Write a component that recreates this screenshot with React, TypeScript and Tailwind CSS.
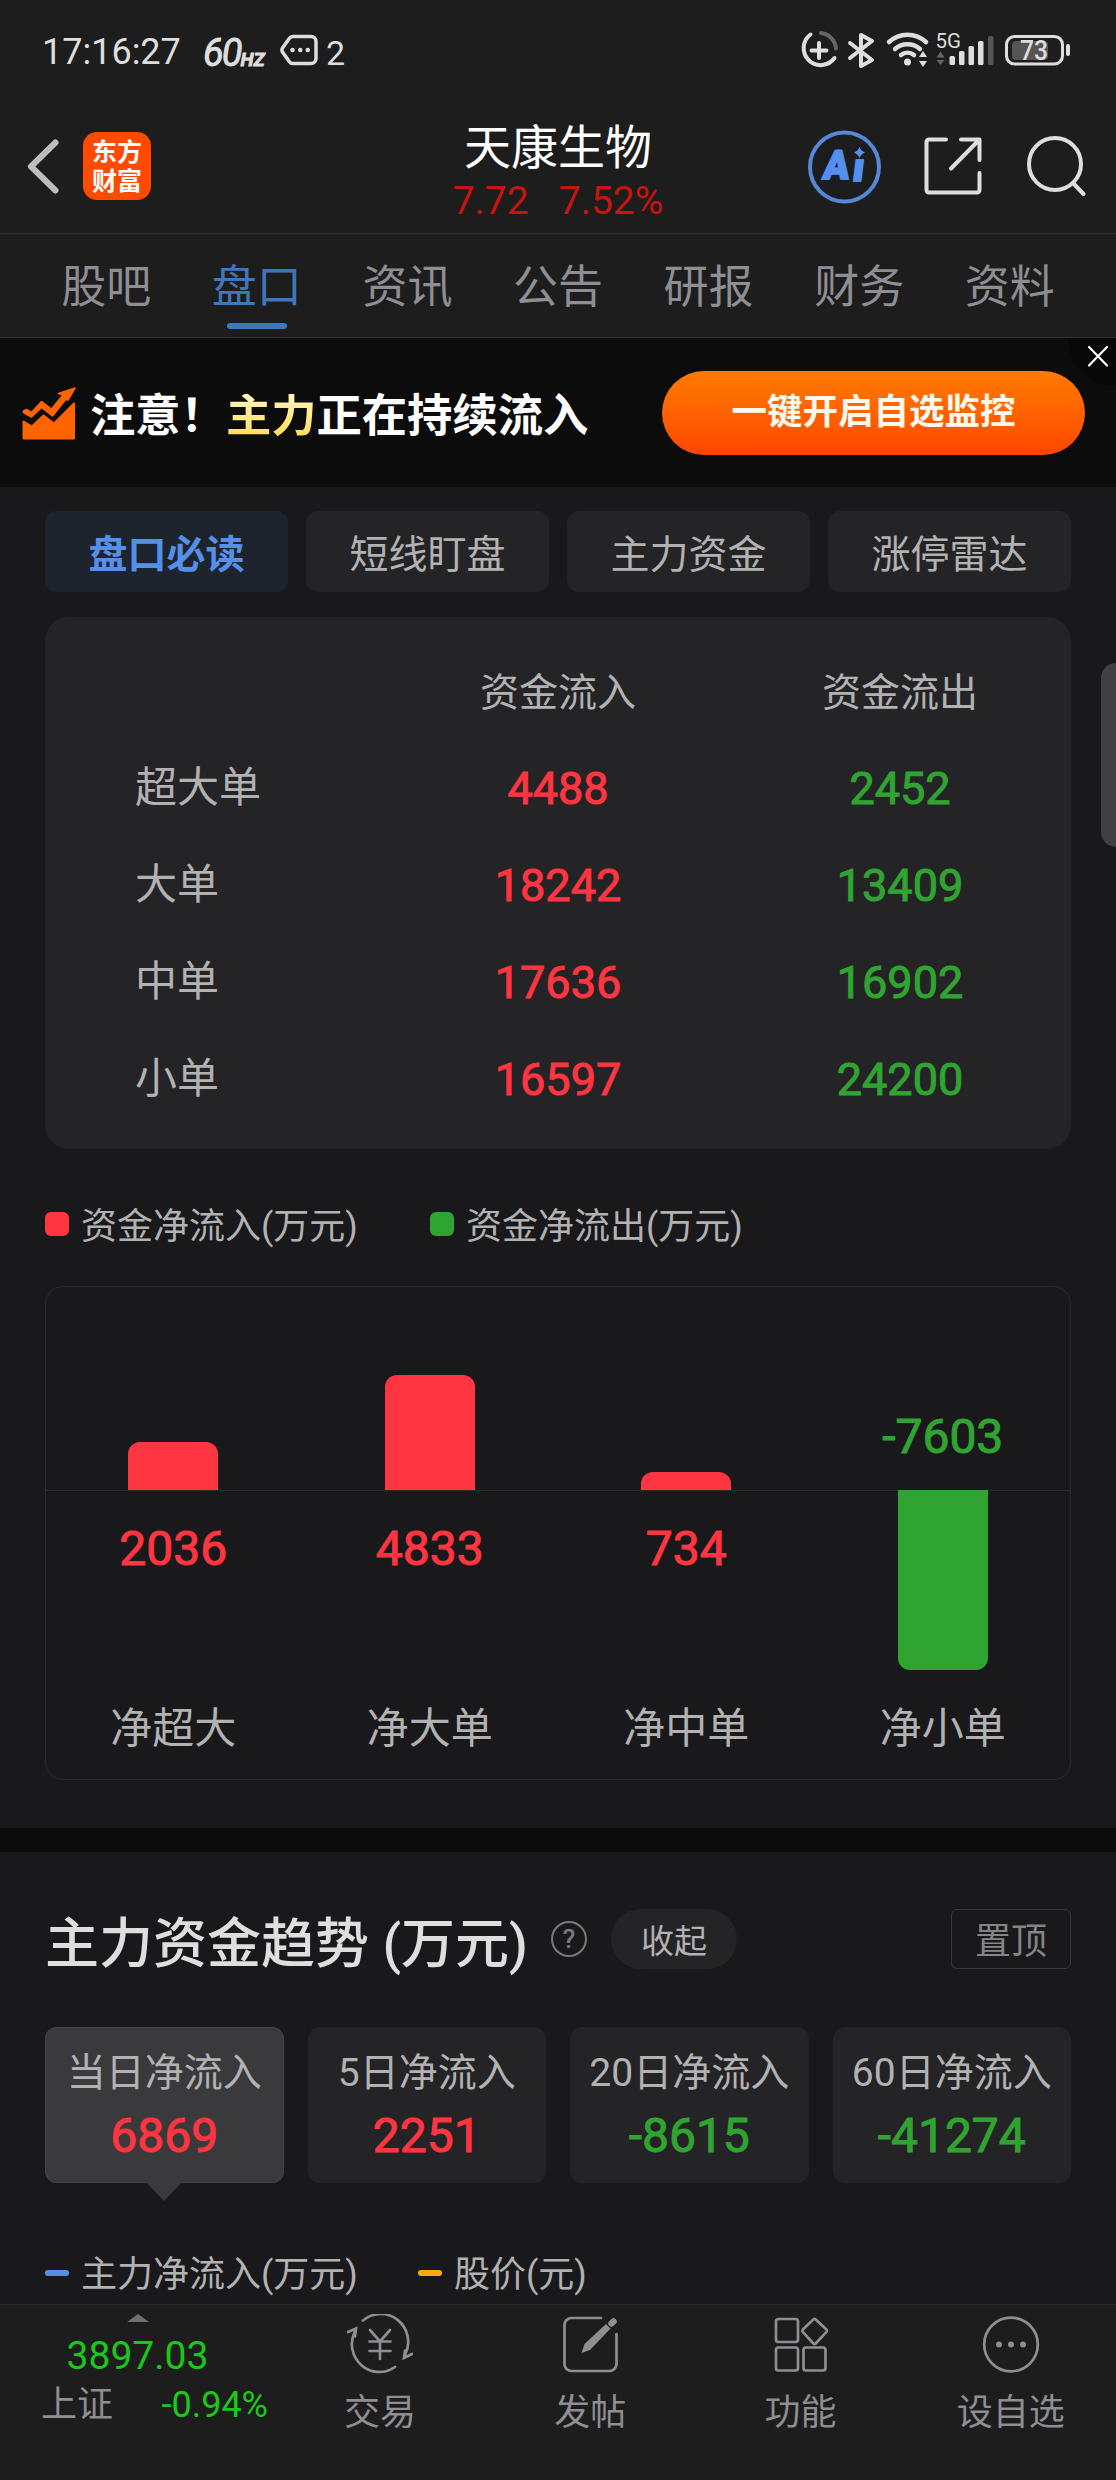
import React from 'react';

const tabs = ['股吧', '盘口', '资讯', '公告', '研报', '财务', '资料'];
const pills = ['盘口必读', '短线盯盘', '主力资金', '涨停雷达'];

const orders = [
  { label: '超大单', inflow: 4488, outflow: 2452 },
  { label: '大单', inflow: 18242, outflow: 13409 },
  { label: '中单', inflow: 17636, outflow: 16902 },
  { label: '小单', inflow: 16597, outflow: 24200 },
];

const bars = [
  { label: '净超大', value: 2036, height: 48 },
  { label: '净大单', value: 4833, height: 115 },
  { label: '净中单', value: 734, height: 18 },
  { label: '净小单', value: -7603, height: 180 },
];

const trends = [
  { label: '当日净流入', value: 6869 },
  { label: '5日净流入', value: 2251 },
  { label: '20日净流入', value: -8615 },
  { label: '60日净流入', value: -41274 },
];

export default function App() {
  return (
    <div className="relative flex h-[2480px] w-[1116px] flex-col overflow-hidden bg-[#19191b] font-['Roboto','Noto_Sans_CJK_SC',sans-serif] leading-none text-[#b2b2b2]">
      <StatusBar />
      <Header />
      <Tabs />
      <Banner />
      <main className="h-[1817px] overflow-hidden">
        <div className="grid grid-cols-4 gap-[18px] px-[45px] pt-6">
          {pills.map((pill, i) => (
            <button
              key={pill}
              className={`flex h-[81px] items-center justify-center rounded-xl pt-[7px] text-[39px] ${
                i === 0 ? 'bg-[#1e242d] font-bold text-[#568fe8]' : 'bg-[#242426]'
              }`}
            >
              {pill}
            </button>
          ))}
        </div>
        <OrderTable />
        <NetChart />
        <div className="mt-12 h-6 bg-[#0c0c0c]"></div>
        <Trend />
      </main>
      <BottomBar />
      {/* Side drawer handle */}
      <div className="absolute top-[663px] right-0 h-[184px] w-[15px] rounded-l-[20px] bg-[#404043]"></div>
    </div>
  );
}

function StatusBar() {
  return (
    <div className="flex h-24 items-center justify-between bg-[#1d1d1d] pt-[8px] pr-[45px] pl-[42px] text-[#dedede]">
      <div className="flex items-center">
        <span className="w-[161px] text-[36px]">17:16:27</span>
        <span className="flex w-[77px] items-baseline pt-[2px] italic [-webkit-text-stroke:0.8px]">
          <span className="text-[38px] tracking-[-2px]">60</span>
          <span className="text-[19px] font-bold">HZ</span>
        </span>
        <svg width="38" height="32" viewBox="0 0 38 32" fill="none" className="-mt-1">
          <path d="M13 2.500h18a5 5 0 0 1 5 5v17a5 5 0 0 1-5 5H13q-2.500 0-3.800-2L2.500 18q-1.200-2 0-4L9.200 4.500q1.300-2 3.800-2z" stroke="currentColor" strokeWidth="3.500" />
          <circle cx="12.500" cy="16" r="2.300" fill="currentColor" />
          <circle cx="20.200" cy="16" r="2.300" fill="currentColor" />
          <circle cx="27.800" cy="16" r="2.300" fill="currentColor" />
        </svg>
        <span className="ml-2 pt-[2px] text-[34px]">2</span>
      </div>
      <svg width="272" height="40" viewBox="800 29 272 40" fill="none" stroke="currentColor" strokeWidth="4" strokeLinecap="round" strokeLinejoin="round" className="-mt-[5px]">
        <path d="M811.500 33.500A17 17 0 1 0 835.500 57M820 42v15M812.500 49.500h15" />
        <path d="M822 32a17 17 0 0 1 15 15.500" stroke="#666" />
        <path d="M851 42l22 17-11 6V34l11 6-22 17" />
        <path d="M890 41a27 27 0 0 1 37 0M896 48a19 19 0 0 1 25 0M902 54a10.500 10.500 0 0 1 13 0" strokeWidth="4.500" />
        <g fill="currentColor" stroke="none">
          <circle cx="908.500" cy="61" r="3.500" />
          <path d="M924 50l4 6h-8zM924 66l4-6h-8z" stroke="#1d1d1d" strokeWidth="3" paintOrder="stroke" />
          <path d="M941.500 50.500l4 6h-8zM941.500 64l4-5h-8z" fill="#666" />
          <rect x="950.500" y="55" width="5.500" height="9" rx="1.500" />
          <rect x="960" y="50" width="5.500" height="14" rx="1.500" />
          <rect x="969.500" y="45" width="5.500" height="19" rx="1.500" />
          <rect x="979" y="40" width="5.500" height="24" rx="1.500" />
          <rect x="989" y="35" width="5.500" height="29" rx="1.500" fill="#555" />
          <text x="936.500" y="47" fontSize="20.500">5G</text>
          <rect x="1013" y="40" width="36" height="19" rx="4" fill="#555" />
          <text x="1021" y="59" fontSize="28" fontWeight="500" textLength="28" lengthAdjust="spacingAndGlyphs">73</text>
          <rect x="1067" y="43" width="4" height="12" rx="2" />
        </g>
        <rect x="1007.500" y="35.500" width="56" height="27.500" rx="8" strokeWidth="3" />
      </svg>
    </div>
  );
}

function Header() {
  return (
    <header className="flex h-[138px] border-b border-[#333] bg-[#1d1d1d]">
      <div className="flex w-[360px] items-center pl-[26px]">
        <svg width="36" height="60" viewBox="0 0 36 60" fill="none" stroke="#bdbdbd" strokeWidth="6" strokeLinecap="round" strokeLinejoin="round" className="mt-[3px]">
          <path d="M29.500 6.500L5 30.500l24.500 24" />
        </svg>
        <div className="mt-[3px] ml-[21px] flex h-[68px] w-[68px] flex-col items-center justify-center rounded-[14px] bg-[#ff4a00] pt-[2px] text-[25px] leading-[29px] font-bold text-white">
          <span>东方</span>
          <span>财富</span>
        </div>
      </div>
      <div className="flex flex-1 flex-col items-center pt-[28px]">
        <h1 className="text-[47px] text-white">天康生物</h1>
        <div className="mt-[11px] flex gap-[30px] text-[39px] text-[#c8140f]">
          <span>7.72</span>
          <span>7.52%</span>
        </div>
      </div>
      <div className="flex w-[360px] items-center justify-end pr-[29px]">
        <svg width="74" height="74" viewBox="0 0 74 74" className="mt-1">
          <circle cx="37.500" cy="37" r="34.500" fill="none" stroke="#5588d6" strokeWidth="4" />
          <g fill="#528fee" stroke="#528fee" strokeWidth="2" strokeLinejoin="round" fontSize="40" fontWeight="900">
            <text transform="translate(15 49) skewX(-7)" textLength="26" lengthAdjust="spacingAndGlyphs">A</text>
            <text transform="translate(44.500 50.500) skewX(-7)">ı</text>
          </g>
          <path d="M52.500 17q1.500 4 5.500 5.500-4 1.500-5.500 5.500-1.500-4-5.500-5.500 4-1.500 5.500-5.500z" fill="#528fee" />
        </svg>
        <svg width="60" height="60" viewBox="0 0 60 60" fill="none" stroke="#dedede" strokeWidth="4" strokeLinecap="round" strokeLinejoin="round" className="mt-[3px] ml-[42px]">
          <path d="M23 3.500H6A2.500 2.500 0 0 0 3.500 6v48A2.500 2.500 0 0 0 6 56.500h48a2.500 2.500 0 0 0 2.500-2.500V37M38 3.500h18.500V24M56 4L28 32.500" />
        </svg>
        <svg width="62" height="62" viewBox="0 0 62 62" fill="none" stroke="#dedede" strokeWidth="4" strokeLinecap="round" className="ml-[42px]">
          <circle cx="30" cy="30" r="26" />
          <path d="M48 49l10.500 11" />
        </svg>
      </div>
    </header>
  );
}

function Tabs() {
  return (
    <nav className="grid h-[104px] grid-cols-7 border-b border-[#333] bg-[#1d1d1d] px-[31px]">
      {tabs.map((tab) => (
        <div key={tab} className="flex flex-col items-center pt-[31px]">
          <span className={`text-[45px] ${tab === '盘口' ? 'text-[#3d78bd]' : 'text-[#8e8e93]'}`}>{tab}</span>
          {tab === '盘口' && <span className="mt-[13px] h-[6px] w-[60px] rounded-full bg-[#3d78bd]"></span>}
        </div>
      ))}
    </nav>
  );
}

function Banner() {
  return (
    <section className="relative flex h-[149px] items-center bg-[#0c0c0c] pr-[31px] pl-[22px]">
      <svg width="55" height="54" viewBox="0 0 55 54" fill="#ff6400" stroke="#ff6400" strokeLinejoin="round" className="mt-[2px]">
        <path d="M1.500 34.500l8.500 5L21.500 28.500l10.500 8L52 16.500v35H1.500z" strokeWidth="2" />
        <path d="M1.500 24l3-1.500 5 3L19.500 14.500l10 7.500L41 8l-4.500-1.500L53 1l-7 12-2-1L30.500 29l-11-8.500-10 9.500-8-4.500z" strokeWidth="1.500" />
      </svg>
      <p className="ml-[13px] flex pt-[8px] text-[45.300px] font-bold text-white">
        <span>注意！</span>
        <span className="bg-linear-to-b from-[#fff3bd] to-[#ffdf3c] bg-clip-text text-transparent">主力</span>
        <span>正在持续流入</span>
      </p>
      <button className="ml-auto h-[84px] w-[423px] rounded-full bg-linear-to-b from-[#ff7a00] to-[#ff4500] text-[35.500px] font-bold text-[#fffaf0]">
        一键开启自选监控
      </button>
      {/* Close */}
      <div className="absolute top-0 right-0 h-12 w-12 rounded-bl-[46px] bg-[#080808]">
        <svg width="48" height="48" viewBox="0 0 48 48" stroke="#fff" strokeWidth="2.200" strokeLinecap="round">
          <path d="M21 9l18 18.500M39 9L21 27.500" />
        </svg>
      </div>
    </section>
  );
}

function OrderTable() {
  return (
    <section className="mx-[45px] mt-[25px] h-[532px] rounded-[24px] bg-[#242426] pt-[28px]">
      <div className="grid h-24 grid-cols-3 items-center text-center text-[39px]">
        <span></span>
        <span>资金流入</span>
        <span>资金流出</span>
      </div>
      {orders.map((row) => (
        <div key={row.label} className="grid h-[97px] grid-cols-3 items-center pb-[3px] text-center text-[45px]">
          <span className="pl-[90px] text-left text-[42px]">{row.label}</span>
          <span className="text-[#ff3541] [-webkit-text-stroke:1px]">{row.inflow}</span>
          <span className="text-[#30a430] [-webkit-text-stroke:1px]">{row.outflow}</span>
        </div>
      ))}
    </section>
  );
}

function NetChart() {
  return (
    <section className="px-[45px] pt-[57px]">
      <div className="flex h-[42px] text-[36px]">
        <Legend color="bg-[#ff3541]" label="资金净流入(万元)" />
        <Legend color="bg-[#30a430]" label="资金净流出(万元)" />
      </div>
      <div className="mt-[38px] grid h-[494px] grid-cols-4 rounded-[18px] shadow-[inset_0_0_0_1px_#2b2b2d]">
        {bars.map((bar) => (
          <Bar key={bar.label} {...bar} />
        ))}
      </div>
    </section>
  );
}

function Legend({ color, label }: { color: string; label: string }) {
  return (
    <div className="flex w-[385px] items-center">
      <span className={`-mt-[6px] mr-3 h-6 w-6 rounded-[6px] ${color}`}></span>
      <span>{label}</span>
    </div>
  );
}

function Bar({ label, value, height }: { label: string; value: number; height: number }) {
  const up = value > 0;
  return (
    <div className="flex flex-col items-center">
      <div className="flex h-[205px] w-full flex-col items-center justify-end border-b border-[#2b2b2d]">
        {up ? (
          <div className="w-[90px] rounded-t-xl bg-[#ff3541]" style={{ height }}></div>
        ) : (
          <span className="mb-[29px] text-[48px] text-[#30a430] [-webkit-text-stroke:1px]">{value}</span>
        )}
      </div>
      <div className="flex h-[210px] flex-col items-center">
        {up ? (
          <span className="mt-[34px] text-[48px] text-[#ff3541] [-webkit-text-stroke:1px]">{value}</span>
        ) : (
          <div className="-mt-px w-[90px] rounded-b-xl bg-[#30a430]" style={{ height }}></div>
        )}
      </div>
      <span className="mt-[7px] text-[42px]">{label}</span>
    </div>
  );
}

function Trend() {
  return (
    <section className="px-[45px] pt-[57px]">
      <div className="flex h-[60px] items-center">
        <h2 className="w-[506px] pt-[11px] text-[54px] font-medium whitespace-nowrap text-[#dedede]">主力资金趋势 (万元)</h2>
        <span className="flex h-9 w-9 shrink-0 items-center justify-center rounded-full border-[2.500px] border-[#7a7a7a] text-[26px] text-[#7a7a7a] [-webkit-text-stroke:0.6px]">?</span>
        <button className="ml-6 h-[60px] w-[126px] rounded-full bg-[#242426] pt-[5px] text-[33px]">收起</button>
        <button className="ml-auto h-[60px] w-[120px] rounded-[6px] border border-[#39393b] pt-[5px] text-[36px] text-[#858585]">置顶</button>
      </div>
      <div className="mt-[58px] grid grid-cols-4 gap-6">
        {trends.map(({ label, value }, i) => (
          <div
            key={label}
            className={`relative flex h-[156px] flex-col items-center rounded-xl pt-[27px] ${
              i === 0 ? 'bg-[#3a3a3c] shadow-[inset_0_0_0_1px_#444446]' : 'bg-[#242426]'
            }`}
          >
            <span className="text-[39px] whitespace-nowrap">{label}</span>
            <span className={`mt-[19px] text-[48px] [-webkit-text-stroke:1px] ${value > 0 ? 'text-[#ff3541]' : 'text-[#30a430]'}`}>{value}</span>
            {i === 0 && (
              <svg width="36" height="19" viewBox="0 0 36 19" fill="#3a3a3c" className="absolute top-[155px]">
                <path d="M0 0h36L18 19z" />
              </svg>
            )}
          </div>
        ))}
      </div>
      <div className="mt-[70px] flex items-center text-[36px]">
        <span className="mr-3 h-[6px] w-6 rounded-full bg-[#568fe8]"></span>
        <span className="w-[337px] pt-1">主力净流入(万元)</span>
        <span className="mr-3 h-[6px] w-6 rounded-full bg-[#ffaa0e]"></span>
        <span className="pt-1">股价(元)</span>
      </div>
    </section>
  );
}

function BottomBar() {
  return (
    <footer className="flex h-[176px] border-t border-[#2a2a2a] bg-[#1d1d1d] text-[36px] text-[#8e8e93]">
      <div className="flex w-[275px] flex-col items-center pt-[9px]">
        <svg width="22" height="8" viewBox="0 0 22 8" fill="#6f6f73">
          <path d="M11 0l11 8H0z" />
        </svg>
        <span className="mt-[15px] text-[39px] text-[#19c819]">3897.03</span>
        <div className="mt-[11px] flex w-full justify-between pr-[7px] pl-[41px]">
          <span>上证</span>
          <span className="text-[#19c819]">-0.94%</span>
        </div>
      </div>
      <NavItem label="交易">
        <path d="M16 6.500A27.500 28 0 0 1 58 41M48 53A27.500 28 0 0 1 8 17M1 18l8-3.500-1 8M65 40l-8 4 1-7.500" />
        <path d="M23 16l10 11.500L43 16M33 27v18M22.500 27.500h21M22.500 37h21" />
      </NavItem>
      <NavItem label="发帖">
        <path d="M44 4H14.500a7 7 0 0 0-7 7v39a7 7 0 0 0 7 7h38a7 7 0 0 0 7-7V20" />
        <path d="M24.500 39l3-9L49 10l4.500 4.500L33 36z" fill="currentColor" stroke="none" />
        <path d="M54.500 9.500l2-2" strokeWidth="6.500" />
      </NavItem>
      <NavItem label="功能">
        <rect x="8" y="5" width="22" height="23" rx="2.500" />
        <rect x="8" y="33.500" width="22" height="23" rx="2.500" />
        <rect x="35.500" y="33.500" width="22" height="23" rx="2.500" />
        <path d="M45.300 5.500q1.200-1.200 2.400 0L58.500 15.500q1 1.200 0 2.400L47.700 29.500q-1.200 1-2.400 0L34.800 17.900q-1-1.200 0-2.400z" />
      </NavItem>
      <NavItem label="设自选">
        <circle cx="33" cy="30.500" r="26.800" />
        <g fill="currentColor" stroke="none">
          <circle cx="21" cy="30.500" r="3" />
          <circle cx="33" cy="30.500" r="3" />
          <circle cx="45" cy="30.500" r="3" />
        </g>
      </NavItem>
    </footer>
  );
}

function NavItem({ label, children }: { label: string; children: React.ReactNode }) {
  return (
    <div className="flex w-[210.250px] flex-col items-center pt-[9px]">
      <svg width="66" height="62" viewBox="0 0 66 62" fill="none" stroke="currentColor" strokeWidth="2.700" strokeLinecap="round">
        {children}
      </svg>
      <span className="mt-[19px]">{label}</span>
    </div>
  );
}
